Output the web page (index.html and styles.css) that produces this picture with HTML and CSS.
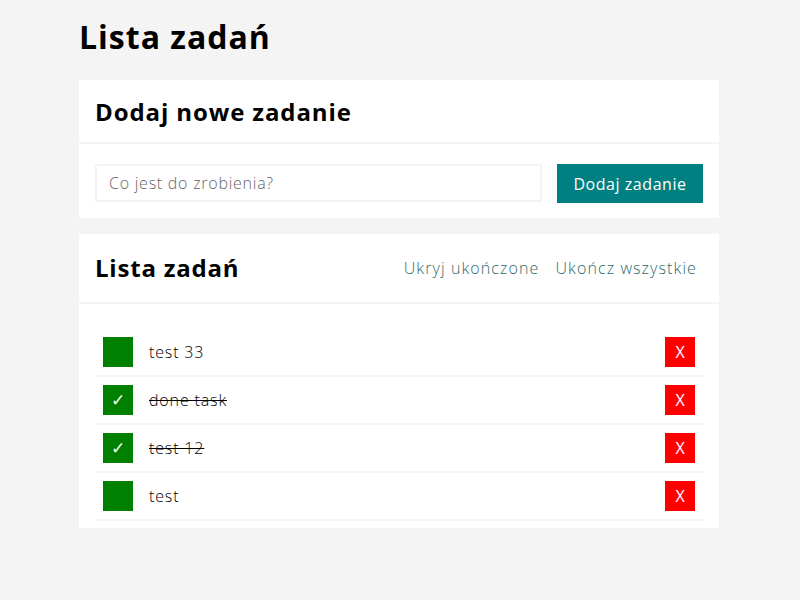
FILE: index.html
```html
<!DOCTYPE html>
<html lang="pl">
<head>
<meta charset="utf-8">
<title>Lista zadań</title>
<link rel="stylesheet" href="styles.css">
</head>
<body>
<main class="app">
  <h1 class="page-title">Lista zadań</h1>

  <section class="card">
    <header class="card-header">
      <h2 class="card-title">Dodaj nowe zadanie</h2>
    </header>
    <form class="add-form">
      <input class="add-input" type="text" placeholder="Co jest do zrobienia?">
      <button class="add-button" type="button">Dodaj zadanie</button>
    </form>
  </section>

  <section class="card">
    <header class="card-header list-header">
      <h2 class="card-title title-narrow">Lista zadań</h2>
      <div class="actions">
        <a class="action" href="#">Ukryj ukończone</a>
        <a class="action" href="#">Ukończ wszystkie</a>
      </div>
    </header>
    <ul class="tasks">
      <li class="task">
        <span class="check"></span>
        <span class="task-text">test 33</span>
        <button class="delete" type="button">X</button>
      </li>
      <li class="task done">
        <span class="check">✓</span>
        <span class="task-text">done task</span>
        <button class="delete" type="button">X</button>
      </li>
      <li class="task done">
        <span class="check">✓</span>
        <span class="task-text">test 12</span>
        <button class="delete" type="button">X</button>
      </li>
      <li class="task">
        <span class="check"></span>
        <span class="task-text">test</span>
        <button class="delete" type="button">X</button>
      </li>
    </ul>
  </section>
</main>
</body>
</html>
```

FILE: styles.css
```css
* { box-sizing: border-box; }

html, body {
  margin: 0;
  padding: 0;
  background: #f4f4f4;
}

body {
  font-family: "Open Sans", "DejaVu Sans", sans-serif;
  color: #222;
}

.app {
  width: 640px;
  margin-left: 79px;
  padding-top: 16px;
}

.page-title {
  margin: 0 0 22px;
  font-size: 32px;
  line-height: 42px;
  font-weight: 700;
  letter-spacing: 1px;
  color: #000;
}

.card {
  background: #fff;
  margin-bottom: 16px;
}

.card-header {
  height: 64px;
  padding: 0 16px;
  display: flex;
  align-items: center;
  border-bottom: 2px solid #f4f4f4;
}

.list-header {
  height: 70px;
  justify-content: space-between;
}

.card-title {
  margin: 0;
  font-size: 24px;
  font-weight: 700;
  letter-spacing: 0.9px;
  color: #000;
}

.title-narrow {
  letter-spacing: 0.8px;
  margin-bottom: 2px;
}

.add-form {
  display: flex;
  gap: 15px;
  padding: 20px 16px 15px;
}

.add-input {
  width: 447px;
  height: 38px;
  border: 2px solid #f4f4f4;
  padding: 0 12px;
  font-family: inherit;
  font-size: 16px;
  font-weight: 300;
  letter-spacing: 0.75px;
  color: #333;
  outline: none;
}

.add-input::placeholder { color: #666; }

.add-button {
  width: 146px;
  height: 39px;
  border: none;
  background: #008080;
  color: #fff;
  font-family: inherit;
  font-size: 16px;
  font-weight: 400;
  letter-spacing: 0.55px;
  padding: 0;
}

.actions {
  display: flex;
  gap: 16px;
  padding-right: 6px;
}

.action {
  color: #2f6a6a;
  text-decoration: none;
  font-size: 16px;
  font-weight: 300;
  letter-spacing: 1.1px;
}

.tasks {
  list-style: none;
  margin: 0;
  padding: 25px 16px 7px;
}

.task {
  display: flex;
  align-items: center;
  height: 48px;
  padding: 0 8px;
  border-bottom: 2px solid #f4f4f4;
}

.check {
  width: 30px;
  height: 30px;
  background: #008000;
  color: #fff;
  display: flex;
  align-items: center;
  justify-content: center;
  font-family: "DejaVu Sans", sans-serif;
  font-size: 17px;
}

.task-text {
  flex: 1;
  margin-left: 16px;
  font-size: 16px;
  font-weight: 300;
  letter-spacing: 0.85px;
  color: #000;
}

.done .task-text {
  text-decoration: line-through;
}

.delete {
  width: 30px;
  height: 30px;
  border: none;
  background: #ff0000;
  color: #fff;
  font-family: "Open Sans", sans-serif;
  font-size: 16px;
  font-weight: 400;
  padding: 0;
}
```
